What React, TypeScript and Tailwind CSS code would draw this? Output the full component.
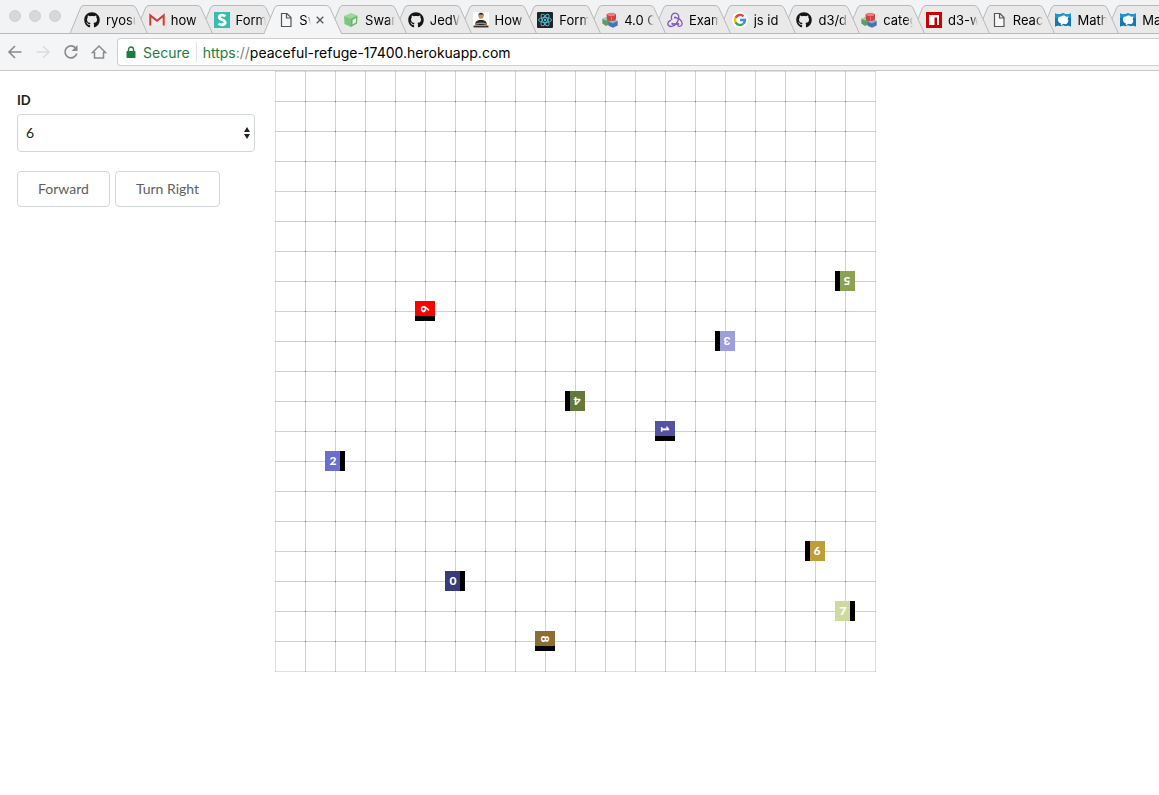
import { useState } from "react";
import type { ReactNode } from "react";
import { FaGithub } from "react-icons/fa";

type IconName =
  | "github" | "gmail" | "semantic" | "page" | "node" | "person" | "react"
  | "cubes" | "redux" | "google" | "npm" | "mathworks";

const icons: Record<IconName, ReactNode> = {
  github: <FaGithub className="size-4 text-[#151515]" />,
  gmail: (
    <svg viewBox="0 0 16 16" className="size-4">
      <path d="M2 3h12v10H2z" fill="#eee" />
      <path d="M1.300 13.500V3.400L8 8.800l6.700-5.400v10.100" fill="none" stroke="#d33b30" strokeWidth="2" />
    </svg>
  ),
  semantic: (
    <svg viewBox="0 0 16 16" className="size-4">
      <rect width="16" height="16" fill="#35bdb2" />
      <path d="M11.400 4.300C10 2.800 5.200 2.600 5.200 5.300c0 2.800 6 2 6 5.200 0 3-4.800 2.700-6.600 1" fill="none" stroke="#fff" strokeWidth="2.800" />
    </svg>
  ),
  page: (
    <svg viewBox="0 0 16 16" className="size-4">
      <path d="M3.500 1.500h5.500l4 4v9h-9.500zM8.500 1.500v4.500h4.500" fill="#f7f7f7" stroke="#555" strokeWidth="1.200" />
    </svg>
  ),
  node: (
    <svg viewBox="0 0 16 16" className="size-4">
      <path d="M1 4l7-3 6.500 2.500L8 6.500z" fill="#9ad89b" />
      <path d="M1 4l7 2.500V15l-6.500-3z" fill="#7bc67e" />
      <path d="M8 6.500l6.500-3-.5 8L8 15z" fill="#64b668" />
      <path d="M9.500 8l3.500-2v4.500l-3.500 2z" fill="#e9f5e9" />
    </svg>
  ),
  person: (
    <svg viewBox="0 0 16 16" className="size-4">
      <rect width="16" height="16" fill="#fff" />
      <path d="M2 13c0-3.500 2-5 6-5s6 1.500 6 5z" fill="#20252b" />
      <circle cx="8" cy="4.200" r="2.500" fill="#c98d62" />
      <path d="M5.200 4C4.800-.3 11.200-.3 10.800 4L10 2.500H6z" fill="#222" />
      <path d="M2 12.200c4-1.200 8-1.200 12 0" stroke="#bd815a" strokeWidth="1.600" fill="none" />
      <path d="M.5 14.500h15" stroke="#333" strokeWidth="2" />
    </svg>
  ),
  react: (
    <svg viewBox="0 0 16 16" className="size-4">
      <rect width="16" height="16" rx="1" fill="#222" />
      <g fill="none" stroke="#54bfdd" strokeWidth=".9">
        <ellipse cx="8" cy="8" rx="6.500" ry="2.500" />
        <ellipse cx="8" cy="8" rx="6.500" ry="2.500" transform="rotate(60 8 8)" />
        <ellipse cx="8" cy="8" rx="6.500" ry="2.500" transform="rotate(120 8 8)" />
      </g>
      <circle cx="8" cy="8" r="1.200" fill="#54bfdd" />
    </svg>
  ),
  cubes: (
    <svg viewBox="0 0 16 16" className="size-4">
      <path d="M.3 7l3.700-1.800L8 7v5l-4 2-3.700-2.500z" fill="#5d9c66" />
      <path d="M.3 7l3.700-1.800L8 7 4 8.600z" fill="#a3cfa4" />
      <path d="M6.500 9.500l4.500-2 4.700 1.500v4.500L11 15.700l-4.500-2z" fill="#4475ae" />
      <path d="M6.500 9.500l4.500-2 4.700 1.500-4.700 2.500z" fill="#8bb1dc" />
      <path d="M4.500 2.200Q9.500-.8 14 2.200v5.300Q9.500 10.500 5 7.700z" fill="#d2403f" />
      <ellipse cx="9.300" cy="2.600" rx="4" ry="1.700" fill="#f07f7d" />
      <path d="M9.500 5v3.500" stroke="#ee8583" strokeWidth=".8" />
    </svg>
  ),
  redux: (
    <svg viewBox="0 0 16 16" className="size-4">
      <g fill="none" stroke="#7f58bd" strokeWidth="1.300" strokeLinecap="round">
        <path d="M4.800 7.500C3.500 4 5.500 1.200 8 1.200s4.300 2.300 3.600 5.300C11 9.300 8.800 13 5.500 14.200 2.500 15.200.5 13.300.9 11.200c.3-1.500 1.500-2.400 2.600-2.700" />
        <path d="M5.500 12h5.800" />
        <path d="M8 5.500c3.500.2 7.200 3.300 7.200 6 0 2.300-2.300 3.500-4.500 2.300" />
      </g>
      <circle cx="8" cy="5.500" r="1" fill="#7f58bd" />
      <circle cx="5.300" cy="11.800" r="1" fill="#7f58bd" />
      <circle cx="11.300" cy="12" r="1" fill="#7f58bd" />
    </svg>
  ),
  google: (
    <svg viewBox="0 0 16 16" className="size-4">
      <circle cx="8" cy="8" r="8" fill="#fff" />
      <g fill="none" strokeWidth="2.400">
        <path d="M11.500 4.300A5 5 0 0 0 3.500 5.800" stroke="#e94235" />
        <path d="M3.500 5.800a5 5 0 0 0 0 4.400" stroke="#fabb05" />
        <path d="M3.500 10.200a5 5 0 0 0 7.700 1.600" stroke="#34a853" />
        <path d="M11.200 11.800A5 5 0 0 0 13 8H8" stroke="#4285f4" />
      </g>
    </svg>
  ),
  npm: (
    <svg viewBox="0 0 16 16" className="size-4">
      <rect width="16" height="16" fill="#cb0000" />
      <path d="M3 3h10v10h-2V5.500H8.500V13H3z" fill="#fff" />
    </svg>
  ),
  mathworks: (
    <svg viewBox="0 0 16 16" className="size-4">
      <path d="M0 1.500c3 1 5 .8 8-.2 3 1 5 1.200 8 .2v13.300c-1.500-1-3.500-1.300-5-.5L8 13.300l-3 1c-1.500-.8-3.500-.5-5 .5z" fill="#0f78b9" />
      <path d="M0 1.500c3 1 5 .8 8-.2 3 1 5 1.200 8 .2V6H0z" fill="#1e93cf" />
      <path d="M2.800 7.500c0-2 1.700-3.300 3.300-3 1.400-1.400 4-1.200 4.900.3l2.500-.3-.8 2.500c1.300 2.200.2 4.700-2.200 5.200l-2-.4-2.600 1.400-.2-1.900C3.900 10.600 2.800 9.300 2.800 7.500z" fill="#fff" />
    </svg>
  ),
};

const tabs: { icon: IconName; title: string; active?: boolean }[] = [
  { icon: "github", title: "ryosuke" },
  { icon: "gmail", title: "how" },
  { icon: "semantic", title: "Form" },
  { icon: "page", title: "Swarm", active: true },
  { icon: "node", title: "Swarm" },
  { icon: "github", title: "JedWatson" },
  { icon: "person", title: "How" },
  { icon: "react", title: "Form" },
  { icon: "cubes", title: "4.0 Ch" },
  { icon: "redux", title: "Exam" },
  { icon: "google", title: "js id" },
  { icon: "github", title: "d3/d3" },
  { icon: "cubes", title: "category" },
  { icon: "npm", title: "d3-w" },
  { icon: "page", title: "React" },
  { icon: "mathworks", title: "Math" },
  { icon: "mathworks", title: "Math" },
];

function Tab({ icon, title, active, order }: { icon: IconName; title: string; active?: boolean; order: number }) {
  return (
    <div
      role="tab"
      aria-selected={!!active}
      className="relative flex h-[29px] min-w-0 flex-1 items-center pl-[14px]"
      style={{ zIndex: active ? 40 : order }}
    >
      <svg className="absolute top-0 left-0 h-[29px] w-[78px]" viewBox="0 0 78 29" aria-hidden="true">
        <path
          d="M0 28.500L10.500 3Q11.500.5 14 .5H62Q65 .5 66 3L77.500 28.500"
          fill={active ? "#f4f5f6" : "#e9e9e9"}
          stroke="#b9b9b9"
        />
        {active ? <path d="M1 28.500H77" stroke="#f4f5f6" /> : <path d="M0 28.500H78" stroke="#b9b9b9" />}
      </svg>
      <span className="relative shrink-0">{icons[icon]}</span>
      <span
        className={
          active
            ? "relative ml-[5px] w-3 shrink-0 overflow-hidden bg-gradient-to-r from-black from-60% to-transparent bg-clip-text text-[13px] leading-5 whitespace-nowrap text-transparent"
            : "relative ml-[6px] w-[30px] shrink-0 overflow-hidden bg-gradient-to-r from-black from-75% to-transparent bg-clip-text text-[13px] leading-5 whitespace-nowrap text-transparent"
        }
      >
        {title}
      </span>
      {active && (
        <button type="button" aria-label="Close tab" className="relative ml-[5px] shrink-0">
          <svg viewBox="0 0 8 8" className="size-2">
            <path d="M.7.700l6.600 6.600M7.300.700L.7 7.300" stroke="#555" strokeWidth="1.300" />
          </svg>
        </button>
      )}
    </div>
  );
}

function Toolbar() {
  return (
    <div className="flex h-[37px] items-center border-b border-[#c8c8c8] bg-[#f4f5f6]">
      <div className="flex items-center gap-3 pl-[7px] text-[#8c898c]">
        <button type="button" aria-label="Back">
          <svg viewBox="0 0 16 16" className="size-4" fill="none" stroke="currentColor" strokeWidth="1.600">
            <path d="M14.500 8H2M8 2L2 8l6 6" />
          </svg>
        </button>
        <button type="button" aria-label="Forward" className="text-[#dcdcde]">
          <svg viewBox="0 0 16 16" className="size-4" fill="none" stroke="currentColor" strokeWidth="1.600">
            <path d="M1.500 8H14M8 2l6 6-6 6" />
          </svg>
        </button>
        <button type="button" aria-label="Reload">
          <svg viewBox="0 0 16 16" className="size-4" fill="none" stroke="currentColor" strokeWidth="1.700">
            <path d="M13.800 9.500A6 6 0 1 1 12.600 4L14 5.500" />
            <path d="M14.500 1v6H8.500z" fill="currentColor" stroke="none" />
          </svg>
        </button>
        <button type="button" aria-label="Home">
          <svg viewBox="0 0 16 16" className="size-4" fill="none" stroke="currentColor" strokeWidth="1.500">
            <path d="M1.500 8.500L8 2l6.500 6.500H12.500v5.500H3.500V8.500z" />
          </svg>
        </button>
      </div>
      <div className="ml-[10px] flex h-7 min-w-0 flex-1 items-center rounded-l-[4px] border border-r-0 border-[#cfcfcf] bg-white pl-2 text-[14px] leading-5">
        <svg viewBox="0 0 10 12" className="h-3 w-[10px]" aria-hidden="true">
          <rect x=".5" y="5" width="9" height="7" rx=".8" fill="#1a7f3e" />
          <path d="M2.500 6V3.500a2.500 2.500 0 0 1 5 0V6" fill="none" stroke="#1a7f3e" strokeWidth="1.400" />
        </svg>
        <span className="ml-[7px] pt-px text-[#1a7f3e]">Secure</span>
        <span className="ml-[6px] h-5 border-l border-[#e2e2e2]" />
        <span className="ml-[6px] pt-px whitespace-nowrap text-black">
          <span className="text-[#1a7f3e]">https</span>
          <span className="text-[#808080]">://</span>peaceful-refuge-17400.herokuapp.com
        </span>
      </div>
    </div>
  );
}

const CELL = 30;
const SIZE = 20;

const robots = [
  { id: 0, x: 6, y: 17, turn: 0, color: "#393b79" },
  { id: 1, x: 13, y: 12, turn: 90, color: "#5254a3" },
  { id: 2, x: 2, y: 13, turn: 0, color: "#6b6ecf" },
  { id: 3, x: 15, y: 9, turn: 180, color: "#9c9ede" },
  { id: 4, x: 10, y: 11, turn: 180, color: "#637939" },
  { id: 5, x: 19, y: 7, turn: 180, color: "#8ca252" },
  { id: 6, x: 5, y: 8, turn: 90, color: "#ff0000" },
  { id: 7, x: 19, y: 18, turn: 0, color: "#cedb9c" },
  { id: 8, x: 9, y: 19, turn: 90, color: "#8c6d31" },
  { id: 9, x: 18, y: 16, turn: 180, color: "#bd9e39" },
];

function Board() {
  const lines = Array.from({ length: SIZE + 1 }, (_, i) => i * CELL);
  const extent = SIZE * CELL + 1;
  return (
    <svg width={extent} height={extent} className="block shrink-0 font-['Lato',sans-serif]" role="img" aria-label="Robot grid">
      <g fill="#000">
        {lines.map((p, i) => (
          <g key={p} fillOpacity={i === 0 || i === SIZE ? 0.12 : 0.18}>
            <rect x={p} y="0" width="1" height={extent} />
            <rect x="0" y={p} width={extent} height="1" />
          </g>
        ))}
        {lines.slice(1, -1).map((x) =>
          lines.slice(1, -1).map((y) => <rect key={`${x}-${y}`} x={x} y={y} width="1" height="1" fillOpacity=".35" />),
        )}
      </g>
      {robots.map((r) => (
        <g key={r.id} transform={`translate(${r.x * CELL} ${r.y * CELL}) rotate(${r.turn})`}>
          <rect x="-10" y="-10" width="20" height="20" fill={r.color} />
          <rect x="5" y="-10" width="5" height="20" fill="#000" />
          <text x="-2" y="4" textAnchor="middle" fontSize="12" fontWeight="900" fill="#fff">
            {r.id}
          </text>
        </g>
      ))}
    </svg>
  );
}

function Controls() {
  const [id, setId] = useState("6");
  const button =
    "h-9 rounded-[4px] border border-[#d2d8d8] bg-white px-5 text-[14px] leading-5 text-[#5f5f60]";
  return (
    <form className="w-[275px] shrink-0 pt-[19px] pr-5 pl-[17px] font-['Lato',sans-serif]" onSubmit={(e) => e.preventDefault()}>
      <label htmlFor="robot-id" className="block text-[13px] leading-5 font-bold text-[#212121]">
        ID
      </label>
      <div className="relative mt-1">
        <select
          id="robot-id"
          value={id}
          onChange={(e) => setId(e.target.value)}
          className="block h-[38px] w-full appearance-none rounded-[4px] border border-[#d2d8d8] bg-white px-2 text-[14px] leading-5 text-[#212121]"
        >
          {robots.map((r) => (
            <option key={r.id}>{r.id}</option>
          ))}
        </select>
        <svg viewBox="0 0 6 12" className="pointer-events-none absolute top-[13px] right-[5px] h-3 w-[6px]" aria-hidden="true">
          <path d="M3 0l3 5H0zM3 12L0 7h6z" fill="#222" />
        </svg>
      </div>
      <div className="mt-[19px] flex gap-[5px]">
        <button type="button" className={button}>Forward</button>
        <button type="button" className={button}>Turn Right</button>
      </div>
    </form>
  );
}

export default function App() {
  return (
    <div className="min-h-screen overflow-hidden bg-white font-['Inter',sans-serif]">
      <header>
        <div className="flex h-[34px] items-end border-b border-[#b9b9b9] bg-[#f2f3f4]">
          <div className="flex w-[70px] shrink-0 gap-2 self-start pt-[10px] pl-[9px]">
            {["Close", "Minimise", "Zoom"].map((name) => (
              <button key={name} type="button" aria-label={name} className="size-3 rounded-full border border-[#d0d0d0] bg-[#d8d8da]" />
            ))}
          </div>
          <div role="tablist" className="-mr-3 -mb-px flex min-w-0 flex-1">
            {tabs.map((t, i) => (
              <Tab key={i} {...t} order={tabs.length - i} />
            ))}
          </div>
        </div>
        <Toolbar />
      </header>
      <main className="flex items-start">
        <Controls />
        <Board />
      </main>
    </div>
  );
}
